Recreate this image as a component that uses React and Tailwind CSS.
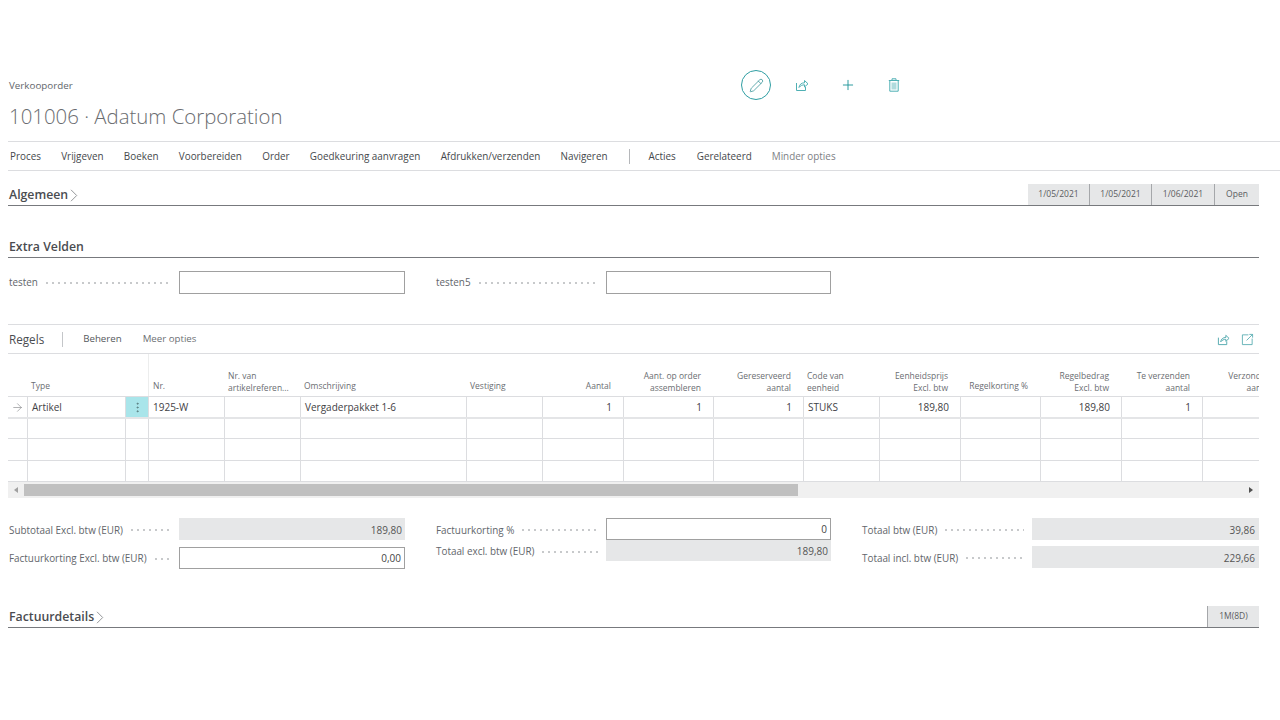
// Verkooporder page — sales order card with lines grid and totals
import React from 'react';
import { Pencil, Plus, ArrowRight, EllipsisVertical } from 'lucide-react';

const MENU = ['Proces', 'Vrijgeven', 'Boeken', 'Voorbereiden', 'Order', 'Goedkeuring aanvragen', 'Afdrukken/verzenden', 'Navigeren'];

const COLUMNS = [
  { lines: [''] },
  { lines: ['Type'] },
  { lines: [''] },
  { lines: ['Nr.'] },
  { lines: ['Nr. van', 'artikelreferen...'] },
  { lines: ['Omschrijving'] },
  { lines: ['Vestiging'] },
  { lines: ['Aantal'], right: true },
  { lines: ['Aant. op order', 'assembleren'], right: true },
  { lines: ['Gereserveerd', 'aantal'], right: true },
  { lines: ['Code van', 'eenheid'] },
  { lines: ['Eenheidsprijs', 'Excl. btw'], right: true },
  { lines: ['Regelkorting %'], right: true },
  { lines: ['Regelbedrag', 'Excl. btw'], right: true },
  { lines: ['Te verzenden', 'aantal'], right: true },
  { lines: ['Verzonden', 'aantal'], right: true },
];

const GRID = 'grid w-[1275px] grid-cols-[19px_98px_23px_76px_76px_166px_76px_81px_90px_90px_76px_81px_80px_81px_81px_81px]';

const ROW = ['', 'Artikel', '', '1925-W', '', 'Vergaderpakket 1-6', '', '1', '1', '1', 'STUKS', '189,80', '', '189,80', '1', ''];

const DATES = [
  { text: '1/05/2021', w: 'w-[62px]' },
  { text: '1/05/2021', w: 'w-[62px]' },
  { text: '1/06/2021', w: 'w-[63px]' },
];

function ShareIcon({ className }) {
  return (
    <svg viewBox="0 0 14 14" fill="none" stroke="currentColor" strokeWidth="1" className={className}>
      <path d="M1.5 5v7.5h9V9" />
      <path d="M4 9.5c.3-3 2.5-4.7 5.5-4.7V2.500L13 5.800 9.500 9V6.800C7.300 6.800 5.500 7.600 4 9.500Z" />
    </svg>
  );
}

function ExpandIcon({ className }) {
  return (
    <svg viewBox="0 0 14 14" fill="none" stroke="currentColor" strokeWidth="0.9" className={className}>
      <path d="M8 2H1.500v10.500H12V6" />
      <path d="M6 8l6.500-6.500M9 1.500h3.500V5" />
    </svg>
  );
}

function TrashIcon({ className }) {
  return (
    <svg viewBox="0 0 12 14" fill="none" stroke="currentColor" strokeWidth="1" className={className}>
      <path d="M4 2V.8h4V2M.8 2.500h10.400" />
      <path d="M1.800 2.500v10.700h8.400V2.500" />
      <rect x="3.500" y="4.500" width="5" height="7" fill="currentColor" fillOpacity="0.45" stroke="none" />
    </svg>
  );
}

function Chevron() {
  return (
    <svg viewBox="0 0 8 13" fill="none" stroke="#8a8c90" strokeWidth="0.9" className="ml-[2px] h-[13px] w-[8px]">
      <path d="M1 .8l5.700 5.700L1 12.200" />
    </svg>
  );
}

function Leader() {
  return <span className="mx-[6px] h-[2px] min-w-0 flex-1 bg-[radial-gradient(circle,#c6c8ca_0.7px,transparent_1px)] bg-[length:6px_2px]" />;
}

function Field({ label, value, kind = 'input', h = 'h-[22px]', pr = 'pr-[3px]', labelPt = 'pt-[2px]', valuePt = '' }) {
  return (
    <div className={`flex ${h} items-center`}>
      <div className={`flex h-full w-[171px] shrink-0 items-center pl-[1px] pr-[2px] ${labelPt}`}>
        <span className="whitespace-nowrap text-[9.9px] text-[#62666b]">{label}</span>
        <Leader />
      </div>
      {kind === 'input' ? (
        <div className={`flex h-full flex-1 items-center justify-end border border-[#a0a0a0] bg-white ${valuePt} ${pr} text-[10px] text-[#444]`}>{value}</div>
      ) : (
        <div className={`flex h-full flex-1 items-center justify-end bg-[#e6e7e8] pt-[2px] ${pr} text-[10px] text-[#555]`}>{value}</div>
      )}
    </div>
  );
}

function SectionHead({ title, chevron, h, children }) {
  return (
    <div className={`flex ${h} w-[1251px] items-end justify-between border-b border-[#77797d]`}>
      <div className="flex items-center pb-[2px] pl-[1px] text-[12.3px] font-semibold leading-[16px] text-[#4a4c50]">
        {title}
        {chevron && <Chevron />}
      </div>
      {children}
    </div>
  );
}

export default function App() {
  return (
    <div className="h-[720px] w-[1280px] overflow-hidden bg-white pl-[8px] pt-[70px] font-['Open_Sans',sans-serif]">
      {/* Title + page actions */}
      <div className="h-[71px]">
        <div className="flex h-[30px] items-center">
          <span className="w-[733px] pl-[1px] pt-[3px] text-[9.8px] text-[#62666b]">Verkooporder</span>
          <div className="flex h-[30px] w-[30px] items-center justify-center rounded-full border border-[#2f9ea3] text-[#2f8f94]">
            <Pencil className="h-[15px] w-[15px]" strokeWidth={1.2} />
          </div>
          <ShareIcon className="ml-[24px] h-[14px] w-[14px] text-[#4fb0b4]" />
          <Plus className="ml-[31px] h-[16px] w-[16px] text-[#1f9499]" strokeWidth={1.4} />
          <TrashIcon className="ml-[32px] h-[14px] w-[12px] text-[#4fb0b4]" />
        </div>
        <div className="flex h-[33px] items-center pl-[1px] text-[20.4px] font-light text-[#6a6c70]">101006 · Adatum Corporation</div>
      </div>

      {/* Action bar */}
      <div className="flex h-[30px] items-center border-y border-[#dcdde0] pl-[2px] text-[9.9px] text-[#45484c]">
        <div className="flex gap-[20.3px]">
          {MENU.map((m) => (
            <span key={m} className="whitespace-nowrap">{m}</span>
          ))}
        </div>
        <span className="ml-[21px] mr-[19px] h-[15px] w-px bg-[#b5b7ba]" />
        <span>Acties</span>
        <span className="ml-[21px]">Gerelateerd</span>
        <span className="ml-[20px] text-[#7d8084]">Minder opties</span>
      </div>

      <SectionHead title="Algemeen" chevron h="h-[35px]">
        <div className="flex h-[21px] text-[8.5px] text-[#5a5c60]">
          {DATES.map((d, i) => (
            <span key={i} className={`flex ${d.w} items-center justify-center border-r border-[#a5a7aa] bg-[#e6e7e8]`}>{d.text}</span>
          ))}
          <span className="flex w-[44px] items-center justify-center bg-[#e6e7e8]">Open</span>
        </div>
      </SectionHead>

      <SectionHead title="Extra Velden" h="h-[52px]" />

      <div className="mt-[13px] flex w-[1251px] gap-[30px]">
        <div className="w-[397px]"><Field label="testen" value="" h="h-[23px]" labelPt="" /></div>
        <div className="w-[396px]"><Field label="testen5" value="" h="h-[23px]" labelPt="" /></div>
      </div>

      {/* Regels */}
      <div className="mt-[30px] flex h-[30px] w-[1251px] items-center border-y border-[#dcdde0] pl-[1px] text-[9.7px] text-[#55585c]">
        <span className="pt-[1px] text-[11.7px] text-[#4a4c50]">Regels</span>
        <span className="ml-[18px] h-[15px] w-px bg-[#c4c6c9]" />
        <span className="ml-[20px]">Beheren</span>
        <span className="ml-[21px] text-[#6d7074]">Meer opties</span>
        <ShareIcon className="ml-auto h-[13px] w-[13px] text-[#4fa8ad]" />
        <ExpandIcon className="ml-[11px] mr-[5px] h-[13px] w-[13px] text-[#4fa8ad]" />
      </div>

      <div className="w-[1251px] overflow-hidden">
        <div className={`${GRID} h-[43px] border-b border-[#dcdde0]`}>
          {COLUMNS.map((c, i) => (
            <div
              key={i}
              className={`flex flex-col justify-end text-[8.5px] leading-[11.5px] text-[#6b6e72] ${c.lines.length > 1 ? 'pb-[3px]' : 'pb-[5px]'} ${i === 3 ? 'border-l border-[#eceded]' : ''} ${c.right ? 'items-end pr-[12px] text-right' : 'pl-[4px]'}`}
            >
              {c.lines.map((l, j) => (
                <span key={j} className="whitespace-nowrap">{l}</span>
              ))}
            </div>
          ))}
        </div>

        <div className={`${GRID} h-[22px] border-b-2 border-[#e4e5e7]`}>
          {ROW.map((v, i) => (
            <div
              key={i}
              className={`flex items-center pt-[1px] text-[10px] text-[#3f4145] ${i > 0 ? 'border-l border-[#dcdde0]' : ''} ${i === 2 ? 'justify-center bg-[#a9e5ea]' : ''} ${COLUMNS[i].right ? 'justify-end pr-[11px]' : 'pl-[4px]'}`}
            >
              {i === 0 && <ArrowRight className="ml-[-1px] h-[13px] w-[13px] text-[#6f7175]" strokeWidth={1} />}
              {i === 2 && <EllipsisVertical className="ml-[-4px] h-[13px] w-[13px] text-[#55777a]" strokeWidth={1.5} />}
              {v}
            </div>
          ))}
        </div>
        {['h-[20px]', 'h-[22px]', 'h-[21px]'].map((h, r) => (
          <div key={r} className={`${GRID} ${h} border-b border-[#dcdde0]`}>
            {COLUMNS.map((_, i) => (
              <div key={i} className={i > 0 ? 'border-l border-[#dcdde0]' : ''} />
            ))}
          </div>
        ))}

        {/* Horizontal scrollbar */}
        <div className="flex h-[16px] items-center bg-[#f0f0f0]">
          <span className="ml-[6px] h-0 w-0 border-y-[3px] border-r-[4px] border-y-transparent border-r-[#a0a0a0]" />
          <div className="ml-[6px] h-[12px] w-[774px] bg-[#c0c0c0]" />
          <span className="ml-auto mr-[6px] h-0 w-0 border-y-[3px] border-l-[4px] border-y-transparent border-l-[#505050]" />
        </div>
      </div>

      {/* Totals */}
      <div className="mt-[20px] flex w-[1251px] gap-[30px]">
        <div className="flex w-[397px] flex-col gap-[7px]">
          <Field label="Subtotaal Excl. btw (EUR)" value="189,80" kind="ro" />
          <Field label="Factuurkorting Excl. btw (EUR)" value="0,00" labelPt="pt-[1px]" />
        </div>
        <div className="flex w-[396px] flex-col">
          <Field label="Factuurkorting %" value="0" valuePt="pt-[1px]" />
          <Field label="Totaal excl. btw (EUR)" value="189,80" kind="ro" h="h-[21px]" />
        </div>
        <div className="flex w-[398px] flex-col gap-[6px]">
          <Field label="Totaal btw (EUR)" value="39,86" kind="ro" pr="pr-[4px]" />
          <Field label="Totaal incl. btw (EUR)" value="229,66" kind="ro" pr="pr-[4px]" />
        </div>
      </div>

      <SectionHead title="Factuurdetails" chevron h="h-[59px]">
        <span className="flex h-[21px] w-[52px] items-center justify-center border-l border-[#a5a7aa] bg-[#e6e7e8] text-[8.5px] text-[#5a5c60]">1M(8D)</span>
      </SectionHead>
    </div>
  );
}
